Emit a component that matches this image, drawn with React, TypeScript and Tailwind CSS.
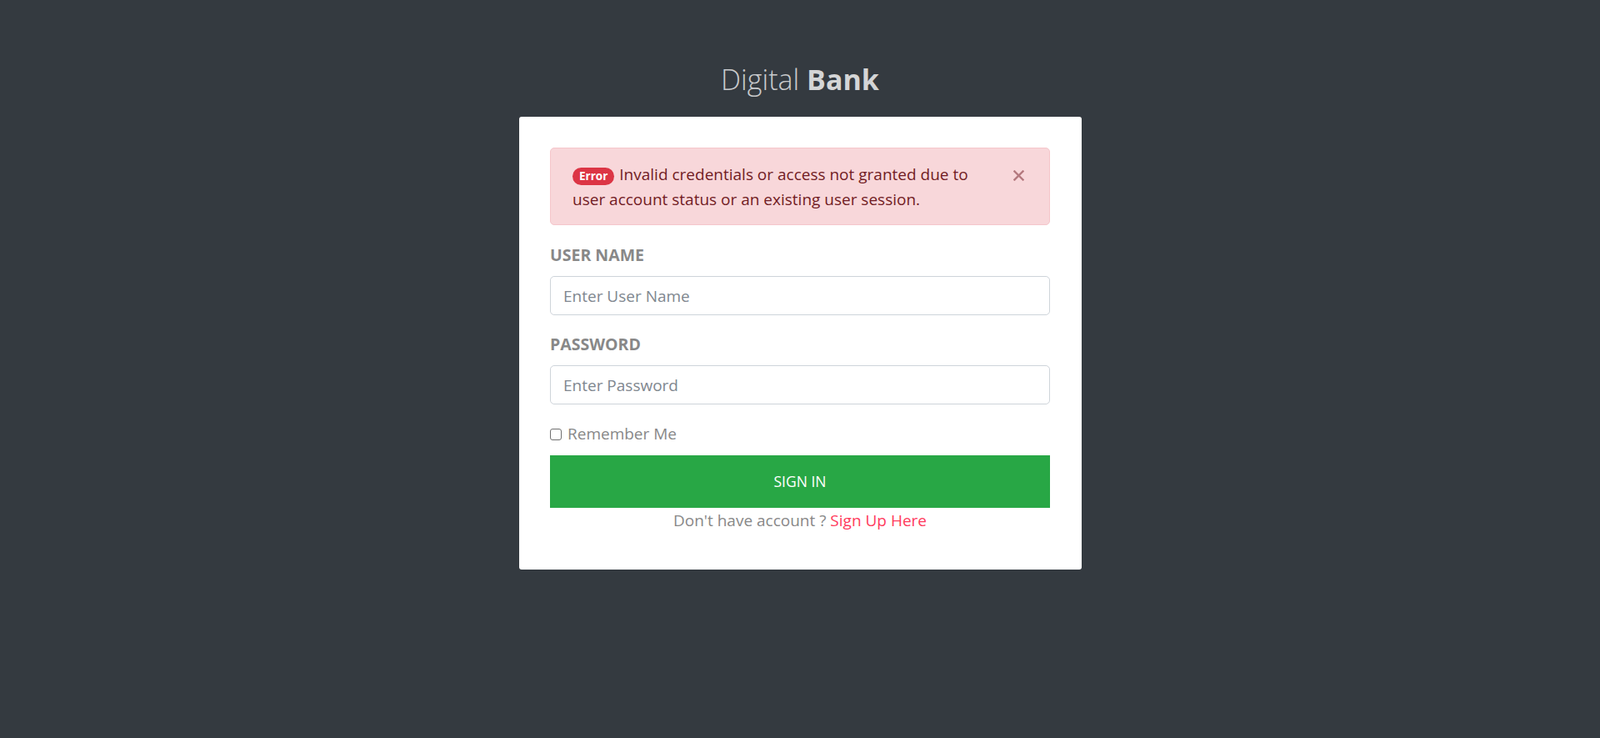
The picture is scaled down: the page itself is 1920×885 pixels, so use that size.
export default function App() {
  return (
    <div
      className="min-h-screen bg-[#343a40] pt-[76px]"
      style={{ fontFamily: '"Open Sans", "Noto Sans", sans-serif' }}
    >
      <h1 className="mb-[26px] text-center text-[34px] leading-[38px] text-[#c9cacc]">
        <span className="font-light">Digital</span> <span className="font-bold text-[#d4d5d6]">Bank</span>
      </h1>

      <div className="mx-auto w-[675px] rounded-[3px] bg-white px-[37.5px] pb-[44px] pt-[37px]">
        {/* alert */}
        <div className="relative mb-[21px] rounded-[5px] border border-[#f5c6cb] bg-[#f8d7da] py-[15.5px] pl-[26px] pr-[80px] text-[19px] leading-[30px] text-[#721c24]">
          <span className="mr-[6px] inline-block rounded-full bg-[#dc3545] px-[8px] py-[4px] text-[13.5px] font-bold leading-none text-white">
            Error
          </span>
          Invalid credentials or access not granted due to
          <br />
          user account status or an existing user session.
          <button className="absolute right-[30px] top-[26px] flex h-[13px] w-[13px] items-center justify-center opacity-50">
            <svg viewBox="0 0 13 13" className="h-[13px] w-[13px]">
              <path d="M1.5 1.5 L11.5 11.5 M11.5 1.5 L1.5 11.5" stroke="#721c24" strokeWidth="2.4" strokeLinecap="square" />
            </svg>
          </button>
        </div>

        <label className="mb-[10px] block text-[19.5px] font-bold leading-[30px] text-[#888888]">USER NAME</label>
        <input
          placeholder="Enter User Name"
          className="mb-[20px] block h-[47px] w-full rounded-[5px] border border-[#ced4da] px-[15px] text-[19px] outline-none placeholder:text-[#80878f]"
        />

        <label className="mb-[10px] block text-[19.5px] font-bold leading-[30px] text-[#888888]">PASSWORD</label>
        <input
          type="password"
          placeholder="Enter Password"
          className="mb-[20px] block h-[47px] w-full rounded-[5px] border border-[#ced4da] px-[15px] text-[19px] outline-none placeholder:text-[#80878f]"
        />

        <div className="mb-[11px] flex h-[30px] items-center text-[19px] leading-[30px] text-[#888888]">
          <span className="mt-[2px] h-[14px] w-[14px] rounded-[3px] border-[1.5px] border-[#6f6f6f] bg-white" />
          <span className="ml-[7px]">Remember Me</span>
        </div>

        <button className="flex h-[63px] w-full items-center justify-center bg-[#28a745] text-[17.5px] text-white">
          SIGN IN
        </button>

        <p className="text-center text-[19px] leading-[30px] text-[#888888]">
          Don't have account ? <a className="text-[#ff3b5c]">Sign Up Here</a>
        </p>
      </div>
    </div>
  );
}
